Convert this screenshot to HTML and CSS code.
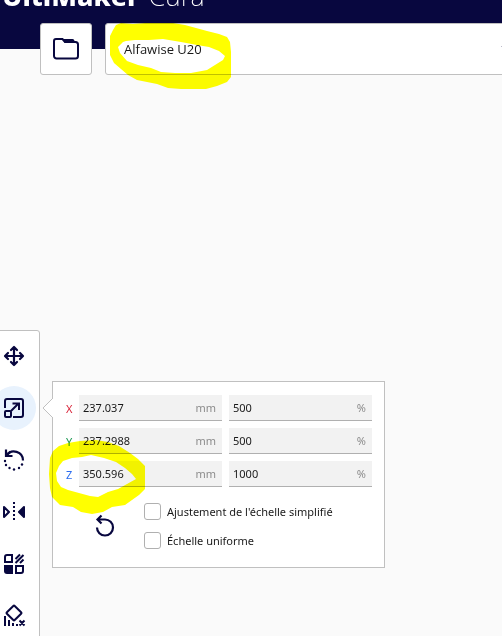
FILE: index.html
```html
<!DOCTYPE html>
<html lang="fr">
<head>
  <meta charset="UTF-8" />
  <meta name="viewport" content="width=device-width, initial-scale=1.0"/>
  <title>UltiMaker Cura</title>
  <link rel="stylesheet" href="styles.css">
</head>
<body>
  <header class="header">
    <div class="logo"><strong>UltiMaker</strong><span>Cura</span></div>
  </header>

  <div class="stage-menu">
    <button class="open-file" type="button" aria-label="Ouvrir un fichier">
      <svg width="26" height="24" viewBox="0 0 26 24">
        <path d="M3 2h6.500l2.500 3h10.500a2.500 2.500 0 0 1 2.500 2.500v11.500a2.500 2.500 0 0 1-2.500 2.500h-19a2.500 2.500 0 0 1-2.500-2.500v-15a2 2 0 0 1 2-2z" fill="none" stroke="#08073f" stroke-width="2"/>
        <path d="M9 2h10.500q2 0 2.500 4H12z" fill="#08073f"/>
      </svg>
    </button>
    <div class="printer">
      <select class="printer-select" aria-label="Imprimante">
        <option>Alfawise U20</option>
      </select>
      <svg class="chevron" width="12" height="8" viewBox="0 0 12 8">
        <path d="M1 1l5 5 5-5" fill="none" stroke="#08073f" stroke-width="1.500"/>
      </svg>
    </div>
  </div>

  <main class="viewer">
    <nav class="toolbar">
      <button class="tool" type="button" aria-label="Déplacer">
        <svg width="24" height="24" viewBox="0 0 24 24" fill="none" stroke="#08073f" stroke-width="2.200" stroke-linecap="round" stroke-linejoin="round">
          <path d="M12 3.500v17M3.500 12h17M9 6l3-3 3 3M9 18l3 3 3-3M6 9l-3 3 3 3M18 9l3 3-3 3"/>
        </svg>
      </button>
      <button class="tool active" type="button" aria-label="Mise à l'échelle">
        <svg width="24" height="24" viewBox="0 0 24 24" fill="none" stroke="#08073f" stroke-width="2">
          <path d="M3 12V5a2 2 0 0 1 2-2h14a2 2 0 0 1 2 2v14a2 2 0 0 1-2 2h-8"/>
          <rect x="3" y="15" width="6" height="6" rx="1"/>
          <path d="M9 15l7.500-7.500M10.500 7.500h6.500v6.500"/>
        </svg>
      </button>
      <button class="tool" type="button" aria-label="Tourner">
        <svg width="24" height="24" viewBox="0 0 24 24" fill="none" stroke="#08073f" stroke-width="2">
          <path d="M4.500 7.500a9 9 0 0 1 16.500 5" stroke-width="2.200"/>
          <path d="M4 1.500V8h6.500M4.500 7.500l4-4" stroke-width="2.200"/>
          <g fill="#08073f" stroke="none">
            <circle cx="20" cy="16.500" r="1.200"/>
            <circle cx="17" cy="20" r="1.200"/>
            <circle cx="12" cy="21.500" r="1.200"/>
            <circle cx="7.500" cy="20" r="1.200"/>
            <circle cx="4" cy="17" r="1.200"/>
            <circle cx="3" cy="13" r="1.200"/>
          </g>
        </svg>
      </button>
      <button class="tool" type="button" aria-label="Miroir">
        <svg width="24" height="24" viewBox="0 0 24 24" fill="none" stroke="#08073f" stroke-width="2" stroke-linejoin="round">
          <path d="M2 7v10l5-5z"/>
          <path d="M22 7v10l-5-5z" fill="#08073f"/>
          <path d="M12 2v20" stroke-dasharray="2"/>
        </svg>
      </button>
      <button class="tool" type="button" aria-label="Paramètres par modèle">
        <svg width="24" height="24" viewBox="0 0 24 24" fill="none" stroke="#08073f" stroke-width="2">
          <path d="M5 3h5v7H3V5a2 2 0 0 1 2-2zM14 14h7v5a2 2 0 0 1-2 2h-5z"/>
          <path d="M2 13h9v9H5a3 3 0 0 1-3-3z" fill="#08073f" stroke="none"/>
          <path d="M13.500 7L18 2.500M13.500 11L21.500 3M18 11l3.500-3.500"/>
        </svg>
      </button>
      <button class="tool" type="button" aria-label="Blocage des supports">
        <svg width="24" height="24" viewBox="0 0 24 24" fill="none" stroke="#08073f" stroke-width="2">
          <rect x="6.500" y="3.500" width="11" height="11" rx="1" transform="rotate(45 12 9)"/>
          <path d="M3 12v10M7 16v6M11 19v3M17.500 16.500l5 5M22.500 16.500l-5 5"/>
          <path d="M14 21h2"/>
        </svg>
      </button>
    </nav>

    <form class="scale-panel">
      <svg class="pointer" width="11" height="22" viewBox="0 0 11 22">
        <path d="M11 1L1 11l10 10" fill="#fff" stroke="#c0c0c0"/>
      </svg>
      <div class="fields">
        <label class="axis x" for="xSize">X</label>
        <div class="field">
          <input type="text" id="xSize" value="237.037"><span class="unit">mm</span>
        </div>
        <div class="field">
          <input type="text" value="500" aria-label="X en pourcentage"><span class="unit">%</span>
        </div>
        <label class="axis y" for="ySize">Y</label>
        <div class="field">
          <input type="text" id="ySize" value="237.2988"><span class="unit">mm</span>
        </div>
        <div class="field">
          <input type="text" value="500" aria-label="Y en pourcentage"><span class="unit">%</span>
        </div>
        <label class="axis z" for="zSize">Z</label>
        <div class="field">
          <input type="text" id="zSize" value="350.596"><span class="unit">mm</span>
        </div>
        <div class="field">
          <input type="text" value="1000" aria-label="Z en pourcentage"><span class="unit">%</span>
        </div>
      </div>

      <div class="options">
        <button class="reset" type="button" aria-label="Réinitialiser">
          <svg width="24" height="24" viewBox="0 0 24 24" fill="none" stroke="#08073f" stroke-width="2.200">
            <path d="M4 13.500a8 8 0 1 0 8-8H5M8.500 1.500l-4 4 4 4"/>
          </svg>
        </button>
        <div class="checks">
          <label class="check"><input type="checkbox">Ajustement de l'échelle simplifié</label>
          <label class="check"><input type="checkbox">Échelle uniforme</label>
        </div>
      </div>
    </form>
  </main>

  <!-- highlighter strokes -->
  <svg class="marker marker-printer" width="124" height="69" viewBox="0 0 124 69">
    <path fill="#ff0" fill-rule="evenodd" d="M7 3L12 1 24 2 36 1 64 1 76 3 87 6 98 9 110 12 118 15 121 20 122 30 122 55 118 60 108 64 97 67 72 67 59 66 48 62 38 60 28 58 19 53 12 47 5 41 1 33 1 14 4 8zM14 20L9 25 11 31 18 39 29 43 42 46 52 50 66 51 82 51 98 48 106 43 114 38 116 34 110 29 100 25 88 23 72 20 54 17 40 18 26 18 17 19z"/>
  </svg>
  <svg class="marker marker-height" width="98" height="76" viewBox="0 0 98 76">
    <path fill="#ff0" fill-rule="evenodd" d="M11 7L20 4 32 2 48 1 60 3 71 7 82 14 90 20 97 27 97 50 91 56 84 61 77 66 64 68 55 73 44 75 33 73 25 68 12 66 4 58 2 49 1 35 2 19 5 12zM15 22L11 27 8 34 9 42 13 48 20 51 31 54 42 57 50 58 60 53 70 50 79 45 88 40 84 35 77 29 68 23 56 19 43 16 34 18 24 19z"/>
  </svg>
</body>
</html>
```
FILE: styles.css
```css
* {
  box-sizing: border-box;
}
body {
  font-family: 'Noto Sans', sans-serif;
  font-size: 11px;
  margin: 0;
  height: 100vh;
  display: flex;
  flex-direction: column;
  overflow: hidden;
  background: #fafafa;
  color: #191919;
  position: relative;
}
button {
  padding: 0;
  border: none;
  background: none;
  cursor: pointer;
}
svg {
  display: block;
}
.header {
  flex: none;
  display: flex;
  align-items: flex-start;
  height: 49px;
  padding-left: 2px;
  background: #08073f;
  color: #fff;
  overflow: hidden;
}
.logo {
  display: flex;
  gap: 9px;
  margin-top: -21px;
  font-size: 27px;
  line-height: 34px;
  font-weight: 200;
  white-space: nowrap;
}
.logo strong {
  font-weight: 800;
}
.stage-menu {
  flex: none;
  display: flex;
  gap: 13px;
  margin-top: -26px;
  padding-left: 40px;
}
.open-file,
.printer {
  height: 52px;
  background: #fff;
  border: 1px solid #c0c0c0;
  border-radius: 3px;
}
.open-file {
  flex: none;
  display: flex;
  align-items: center;
  justify-content: center;
  width: 52px;
}
.printer {
  flex: 1;
  display: flex;
  align-items: center;
  margin-right: -24px;
  padding: 0 12px 0 18px;
}
.printer-select {
  flex: 1;
  height: 100%;
  padding: 0;
  border: none;
  background: none;
  appearance: none;
  font: 13px 'Open Sans', sans-serif;
  color: #191919;
}
.viewer {
  flex: 1;
  min-height: 0;
  display: flex;
  align-items: flex-start;
  gap: 12px;
  padding-top: 255px;
}
.toolbar {
  flex: none;
  display: flex;
  flex-direction: column;
  width: 52px;
  margin-left: -12px;
  background: #fff;
  border: 1px solid #c0c0c0;
  border-radius: 3px;
  padding: 3px;
  gap: 8px;
}
.tool {
  flex: none;
  display: flex;
  align-items: center;
  justify-content: center;
  width: 44px;
  height: 44px;
  border-radius: 50%;
}
.tool.active {
  background: #e8f2fd;
}
.scale-panel {
  position: relative;
  width: 333px;
  margin-top: 51px;
  padding: 13px 12px 18px 13px;
  background: #fff;
  border: 1px solid #c0c0c0;
}
.pointer {
  position: absolute;
  left: -11px;
  top: 15px;
}
.fields {
  display: grid;
  grid-template-columns: 6px minmax(0, 1fr) minmax(0, 1fr);
  gap: 7px;
  align-items: center;
}
.axis.x {
  color: #d9253b;
}
.axis.y {
  color: #1f9a55;
}
.axis.z {
  color: #2a6cf0;
}
.field {
  display: flex;
  align-items: center;
  height: 26px;
  padding: 0 6px 0 4px;
  background: #f2f2f2;
  border-bottom: 1px solid #b0b0b0;
}
.field input {
  flex: 1;
  min-width: 0;
  padding: 0;
  border: none;
  background: none;
  font: 11px 'Noto Sans', sans-serif;
  color: #191919;
}
.unit {
  color: #8c8c8c;
}
.options {
  display: flex;
  align-items: center;
  gap: 27px;
  margin-top: 16px;
  padding-left: 27px;
}
.checks {
  display: flex;
  flex-direction: column;
  gap: 12px;
}
.check {
  display: flex;
  align-items: center;
  gap: 6px;
  height: 17px;
}
.check input {
  appearance: none;
  width: 17px;
  height: 17px;
  margin: 0;
  background: #fff;
  border: 1px solid #b0b0b0;
  border-radius: 3px;
}
.marker {
  position: absolute;
  mix-blend-mode: multiply;
  pointer-events: none;
}
.marker-printer {
  left: 109px;
  top: 22px;
}
.marker-height {
  left: 48px;
  top: 439px;
}
```
